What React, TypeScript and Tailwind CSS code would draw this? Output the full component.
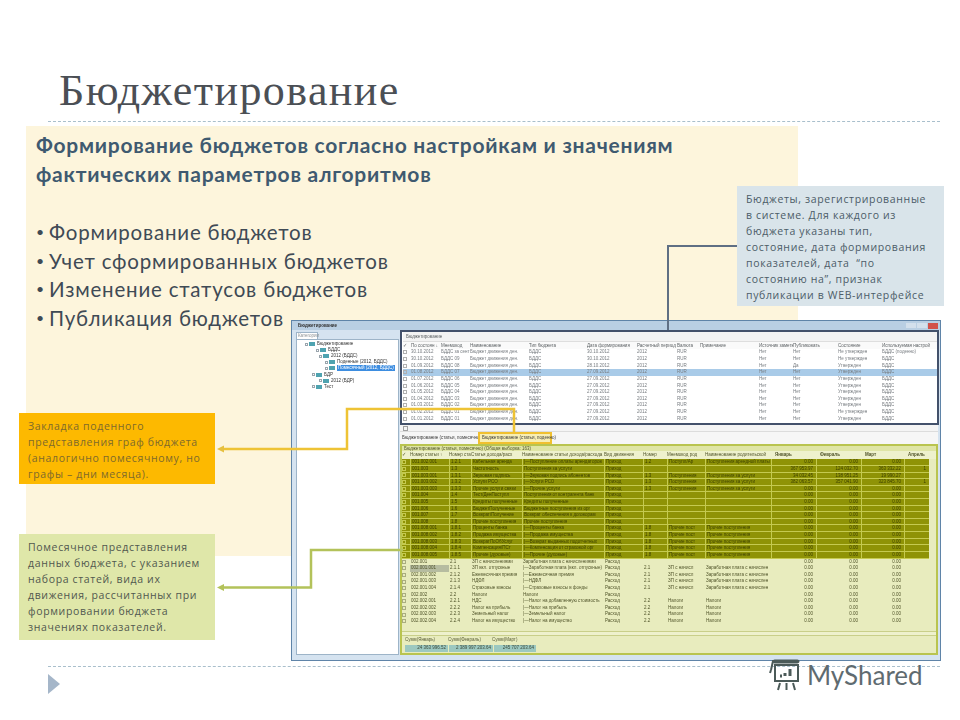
const topCols = "grid grid-cols-[8px_30px_29px_59px_58px_50px_40px_23px_59px_34px_45px_44px_50px]";
const gridCols = "grid grid-cols-[8px_39px_22px_51px_82px_39px_24px_38px_66px_45px_45px_43px_25px]";

const topHead = ["✓", "По состоян ↓", "Мнемокод", "Наименование", "Тип бюджета", "Дата формирования", "Расчетный период", "Валюта", "Примечание", "Источник заметк", "Публиковать", "Состояние", "Используемая настрой"];

const budgets = [
  ["30.10.2012", "БДДС за сент", "30.10.2012", "Нет", "Не утвержден", "БДДС (поденно)"],
  ["30.10.2012", "БДДС 09", "30.10.2012", "Нет", "Не утвержден", "БДДС"],
  ["01.09.2012", "БДДС 08", "28.10.2012", "Да", "Утвержден", "БДДС"],
  ["01.08.2012", "БДДС 07", "27.09.2012", "Нет", "Утвержден", "БДДС"],
  ["01.07.2012", "БДДС 06", "27.09.2012", "Нет", "Утвержден", "БДДС"],
  ["01.06.2012", "БДДС 05", "27.09.2012", "Нет", "Утвержден", "БДДС"],
  ["01.05.2012", "БДДС 04", "27.09.2012", "Нет", "Утвержден", "БДДС"],
  ["01.04.2012", "БДДС 03", "27.09.2012", "Нет", "Утвержден", "БДДС"],
  ["01.03.2012", "БДДС 02", "27.09.2012", "Нет", "Утвержден", "БДДС"],
  ["01.02.2012", "БДДС 01", "27.09.2012", "Нет", "Не утвержден", "БДДС"],
  ["01.01.2012", "БДДС 01", "27.09.2012", "Нет", "Утвержден", "БДДС"],
];

const gridHead = ["✓", "Номер статьи ↑", "Номер ста", "Статья дохода/расх", "Наименование статьи дохода/расхода", "Вид движения", "Номер", "Мнемокод род", "Наименование родительской", "Январь", "Февраль", "Март", "Апрель"];

const olive = [
  ["001.002.001", "1.2.1", "Кабельная аренда", "|—Поступление оплаты арендаторов", "Приход", "1.2", "Поступл/Ар", "Поступления арендной платы", "0.00", "0.00", "0.00", ""],
  ["001.003", "1.3", "Частотность", "Поступления за услуги", "Приход", "", "", "", "367 953.97", "124 032.70", "363 332.22", "1"],
  ["001.003.001", "1.3.1", "Звуковая подпись", "|—Звуковая подпись абонентов", "Приход", "1.3", "Поступления", "Поступления за услуги", "34 032.45", "138 951.25", "19 990.27", ""],
  ["001.003.002", "1.3.2", "Услуги РСО", "|—Услуги РСО", "Приход", "1.3", "Поступления", "Поступления за услуги", "382 063.57", "357 041.90", "323 845.70", "1"],
  ["001.003.003", "1.3.3", "Прочие услуги связи", "|—Прочие услуги", "Приход", "1.3", "Поступления", "Поступления за услуги", "0.00", "0.00", "0.00", ""],
  ["001.004", "1.4", "Тест/ДенПоступл", "Поступления от контрагента банк", "Приход", "", "", "", "0.00", "0.00", "0.00", ""],
  ["001.005", "1.5", "Кредиты полученные", "Кредиты полученные", "Приход", "", "", "", "0.00", "0.00", "0.00", ""],
  ["001.006", "1.6", "БюджетПолученные", "Бюджетные поступления из орг", "Приход", "", "", "", "0.00", "0.00", "0.00", ""],
  ["001.007", "1.7", "Возврат/Получение", "Возврат обеспечения к договорам", "Приход", "", "", "", "0.00", "0.00", "0.00", ""],
  ["001.008", "1.8", "Прочие поступления", "Прочие поступления", "Приход", "", "", "", "0.00", "0.00", "0.00", ""],
  ["001.008.001", "1.8.1", "Проценты банка", "|—Проценты банка", "Приход", "1.8", "Прочие пост", "Прочие поступления", "0.00", "0.00", "0.00", ""],
  ["001.008.002", "1.8.2", "Продажа имущества", "|—Продажа имущества", "Приход", "1.8", "Прочие пост", "Прочие поступления", "0.00", "0.00", "0.00", ""],
  ["001.008.003", "1.8.3", "ВозвратПоОбУслуг", "|—Возврат выданных подотчетных", "Приход", "1.8", "Прочие пост", "Прочие поступления", "0.00", "0.00", "0.00", ""],
  ["001.008.004", "1.8.4", "Компенсация/ПСт", "|—Компенсация от страховой орг", "Приход", "1.8", "Прочие пост", "Прочие поступления", "0.00", "0.00", "0.00", ""],
  ["001.008.005", "1.8.5", "Прочие (духовые)", "|—Прочие (духовые)", "Приход", "1.8", "Прочие пост", "Прочие поступления", "0.00", "0.00", "0.00", ""],
];

const pale = [
  ["002.001", "2.1", "ЗП с начислениями", "Заработная плата с начислениями", "Расход", "", "", "", "0.00", "0.00", "0.00", ""],
  ["002.001.001", "2.1.1", "ЗП вкл. отпускные", "|—Заработная плата (вкл. отпускные)", "Расход", "2.1", "ЗП с начисл", "Заработная плата с начислен", "0.00", "0.00", "0.00", ""],
  ["002.001.002", "2.1.2", "Ежемесячная премия", "|—Ежемесячная премия", "Расход", "2.1", "ЗП с начисл", "Заработная плата с начислен", "0.00", "0.00", "0.00", ""],
  ["002.001.003", "2.1.3", "НДФЛ", "|—НДФЛ", "Расход", "2.1", "ЗП с начисл", "Заработная плата с начислен", "0.00", "0.00", "0.00", ""],
  ["002.001.004", "2.1.4", "Страховые взносы", "|—Страховые взносы в фонды", "Расход", "2.1", "ЗП с начисл", "Заработная плата с начислен", "0.00", "0.00", "0.00", ""],
  ["002.002", "2.2", "Налоги", "Налоги", "Расход", "", "", "", "0.00", "0.00", "0.00", ""],
  ["002.002.001", "2.2.1", "НДС", "|—Налог на добавленную стоимость", "Расход", "2.2", "Налоги", "Налоги", "0.00", "0.00", "0.00", ""],
  ["002.002.002", "2.2.2", "Налог на прибыль", "|—Налог на прибыль", "Расход", "2.2", "Налоги", "Налоги", "0.00", "0.00", "0.00", ""],
  ["002.002.003", "2.2.3", "Земельный налог", "|—Земельный налог", "Расход", "2.2", "Налоги", "Налоги", "0.00", "0.00", "0.00", ""],
  ["002.002.004", "2.2.4", "Налог на имущество", "|—Налог на имущество", "Расход", "2.2", "Налоги", "Налоги", "0.00", "0.00", "0.00", ""],
];

const tree = [
  { label: "Бюджетирование", pad: "pl-[8px]" },
  { label: "БДДС", pad: "pl-[19px]" },
  { label: "2012 (БДДС)", pad: "pl-[22px]" },
  { label: "Поденные (2012, БДДС)", pad: "pl-[28px]" },
  { label: "Помесячный (2012, БДДС)", pad: "pl-[28px]", selected: true },
  { label: "БДР", pad: "pl-[15px]" },
  { label: "2012 (БДР)", pad: "pl-[22px]" },
  { label: "Тест", pad: "pl-[15px]" },
];

const bullets = ["Формирование бюджетов", "Учет сформированных бюджетов", "Изменение статусов бюджетов", "Публикация бюджетов"];

function BudgetWindow() {
  return (
    <div className="absolute left-[291px] top-[320px] w-[650px] h-[341px] border border-[#5f84a8] bg-[#d5e3f0] flex flex-col font-['Liberation_Sans',sans-serif] text-[4.5px] leading-[6px] text-[#5a5f62] blur-[0.3px]">
      {/* заголовок окна */}
      <div className="h-[9px] shrink-0 flex items-center justify-between pl-[6px] pr-[2px] bg-[#b9cfe3]">
        <span className="font-bold text-[#333]">Бюджетирование</span>
        <div className="flex items-center gap-[1px]">
          <div className="w-[10px] h-[5px] bg-[#d3e0ec]"></div>
          <div className="w-[10px] h-[5px] bg-[#d3e0ec]"></div>
          <div className="w-[10px] h-[6px] bg-[#d2524a]"></div>
        </div>
      </div>

      <div className="flex-1 flex pl-[4px] pr-[3px] pb-[5px] gap-[1px] min-h-0">
        {/* дерево категорий */}
        <div className="w-[103px] shrink-0 flex flex-col pt-[2px]">
          <div className="w-[22px] h-[7px] bg-white border border-b-0 border-[#9db4c8] text-[#8a8f92] px-[1px] leading-[6px]">Категории</div>
          <div className="flex-1 bg-white border border-[#9db4c8] pt-[1px]">
            {tree.map((node) => (
              <div key={node.label} className={`flex items-center gap-[1px] h-[6.1px] whitespace-nowrap ${node.pad}`}>
                <div className="w-[3px] h-[3px] border-[0.5px] border-[#9aa5ad]"></div>
                <div className="w-[6px] h-[4px] bg-[#4fa3b0] mr-[1px]"></div>
                <span className={node.selected ? "bg-[#3d8de0] text-white px-[1px]" : "text-[#333]"}>{node.label}</span>
              </div>
            ))}
          </div>
        </div>

        <div className="flex-1 flex flex-col min-w-0 -mr-[1px]">
          {/* реестр бюджетов */}
          <div className="h-[95px] shrink-0 -mr-[1px] border-2 border-[#43516b] bg-white pl-[1px]">
            <div className="h-[10px] flex items-center pl-[3px] bg-[#f3f3f3] border-b border-[#dedede]">Бюджетирование</div>
            <div className={`${topCols} h-[7px] items-center bg-[#fafafa]`}>
              {topHead.map((h) => (
                <div key={h} className="whitespace-nowrap overflow-hidden">{h}</div>
              ))}
            </div>
            {budgets.map((b, i) => (
              <div key={i} className={`${topCols} h-[6.65px] items-center text-[#777c80] ${i === 3 ? "bg-[#a9cbe8]" : ""}`}>
                <div className="w-[4px] h-[4px] border-[0.5px] border-[#b0b0b0]"></div>
                <div>{b[0]}</div>
                <div className="whitespace-nowrap overflow-hidden">{b[1]}</div>
                <div className="whitespace-nowrap overflow-hidden">Бюджет движения ден.</div>
                <div>БДДС</div>
                <div>{b[2]}</div>
                <div>2012</div>
                <div>RUR</div>
                <div></div>
                <div>Нет</div>
                <div>{b[3]}</div>
                <div>{b[4]}</div>
                <div>{b[5]}</div>
              </div>
            ))}
          </div>

          {/* панель разделителя */}
          <div className="h-[7px] shrink-0 flex items-center pl-[3px] bg-[#f4f4f4] border-b border-[#dcdcdc]">
            <div className="w-[5px] h-[5px] border-[0.5px] border-[#a0a0a0]"></div>
          </div>

          {/* закладки */}
          <div className="h-[12px] shrink-0 flex items-center pl-[2px] bg-[#f6f6f6] text-[#3a3a3a]">
            <div className="w-[76px] whitespace-nowrap">Бюджетирование (статьи, помесячно)</div>
            <div className="w-[74px] h-[12px] flex items-center pl-[2px] border-2 border-[#f0c030] bg-[#f7eeb4] whitespace-nowrap">Бюджетирование (статьи, поденно)</div>
          </div>

          {/* таблица статей */}
          <div className="flex-1 flex flex-col min-h-0 border-2 border-[#b9c44f] bg-[#e8ecbe] text-[#50542a]">
            <div className="h-[5px] shrink-0 flex items-center pl-[2px] bg-[#dfe5a6] whitespace-nowrap">Бюджетирование (статьи, помесячно) (Общая выборка: 163)</div>
            <div className={`${gridCols} h-[8.4px] shrink-0 items-center bg-[#eef1cd]`}>
              {gridHead.map((h, i) => (
                <div key={h} className={`whitespace-nowrap overflow-hidden ${i > 8 ? "font-bold pl-[4px]" : ""}`}>{h}</div>
              ))}
            </div>
            {olive.map((r, i) => (
              <GridRow key={i} cells={r} olive />
            ))}
            {pale.map((r, i) => (
              <GridRow key={i} cells={r} marked={i === 1} />
            ))}
            <div className="flex-1"></div>
            <div className="h-[5px] shrink-0 border-y border-[#c9cf8a] bg-[#eef1cd]"></div>
            <div className="h-[17px] shrink-0 pt-[1px] pl-[3px]">
              <div className="flex text-[#5a5e3a]">
                <div className="w-[43px]">Сумм(Январь)</div>
                <div className="w-[44px]">Сумм(Февраль)</div>
                <div className="w-[43px]">Сумм(Март)</div>
              </div>
              <div className="flex mt-[1.5px] text-[#3c4a3a]">
                <div className="w-[43px] h-[7px] bg-[#9cc8c0] text-right pr-[2px]">24 363 996.52</div>
                <div className="w-[44px] h-[7px] bg-[#9cc8c0] text-right pr-[2px] ml-[1px]">2 389 997 203.64</div>
                <div className="w-[42px] h-[7px] bg-[#9cc8c0] text-right pr-[2px] ml-[1px]">245 707 203.64</div>
              </div>
            </div>
          </div>
        </div>
      </div>
    </div>
  );
}

function GridRow({ cells, olive, marked }: { cells: string[]; olive?: boolean; marked?: boolean }) {
  return (
    <div className={`${gridCols} h-[6.62px] shrink-0 items-center ${olive ? "bg-[#8f9306] text-[#3c3f00] border-b-[0.5px] border-[#c5ca50]" : ""} w-[527px]`}>
      <div className={`w-[4px] h-[4px] border-[0.5px] ${olive ? "border-[#c5ca50]" : "border-[#a9ad80]"}`}></div>
      {cells.map((c, i) => (
        <div
          key={i}
          className={`h-full whitespace-nowrap overflow-hidden ${i > 7 ? "text-right pr-[3px]" : "pl-[1px]"} ${olive ? "border-l-[0.5px] border-[#c5ca50]" : ""} ${marked && i === 0 ? "bg-[#b6bca0]" : ""}`}
        >
          {c}
        </div>
      ))}
    </div>
  );
}

function Connectors() {
  return (
    <svg className="absolute left-0 top-0 pointer-events-none" width="960" height="720" viewBox="0 0 960 720" fill="none">
      <path d="M737 246H668V330" stroke="#5f6f84" strokeWidth="2" />
      <path d="M224 449H347V409H514V432" stroke="#eec335" strokeWidth="2.5" />
      <path d="M217 449L224 445.5V452.5Z" fill="#e6c040" />
      <path d="M224 587.5H311V550H403" stroke="#b3c25a" strokeWidth="2.5" />
      <path d="M217 587.5L224 584V591Z" fill="#b3c25a" />
    </svg>
  );
}

function Logo() {
  return (
    <div className="absolute left-[768px] top-[658px] flex items-center gap-[6px]">
      <svg width="33" height="34" viewBox="0 0 33 34" fill="none" stroke="#4b5a58">
        <path d="M3 12L5 3H31" strokeWidth="2" />
        <rect x="5" y="2" width="26" height="3" fill="#4b5a58" strokeWidth="1" rx="1.5" />
        <path d="M2 15L3 12" strokeWidth="2" />
        <rect x="7" y="7" width="23" height="16" strokeWidth="2" />
        <path d="M12 18h2M17 18v-3M22 18v-7" strokeWidth="3" />
        <path d="M12 25L10 32M18.5 25V32M25 25L27 32" strokeWidth="2" />
      </svg>
      <span className="font-['Lato','Open_Sans',sans-serif] text-[26px] leading-[34px] text-[#5f6b70]">MyShared</span>
    </div>
  );
}

export default function App() {
  return (
    <div className="relative w-[960px] h-[720px] bg-white overflow-hidden font-['Open_Sans',sans-serif]">
      <h1 className="h-[118px] pt-[66px] pl-[59px] font-['Liberation_Serif',serif] text-[44px] leading-[50px] tracking-[1.43px] text-[#4b4f55]">
        Бюджетирование
      </h1>
      <div className="ml-[48px] mr-[20px] mt-[3px] border-t border-dashed border-[#a9bfcc]"></div>

      <section className="ml-[26px] mt-[4px] w-[772px] h-[430px] bg-[#fdf5dc] pl-[10px] pt-[4px]">
        <h2 className="font-['Lato','Open_Sans',sans-serif] font-bold text-[21px] leading-[29px] tracking-[0.75px] text-[#3f5a70] w-[680px]">
          Формирование бюджетов согласно настройкам и значениям фактических параметров алгоритмов
        </h2>
        <ul className="mt-[30px] font-['Lato','Open_Sans',sans-serif] text-[20.5px] leading-[28.7px] tracking-[0.8px] text-[#3f4a55]">
          {bullets.map((item) => (
            <li key={item} className="flex">
              <span className="w-[13px] text-[14px]">•</span>
              {item}
            </li>
          ))}
        </ul>
      </section>

      <div className="ml-[48px] mr-[20px] mt-[110px] border-t border-dashed border-[#a9bfcc]"></div>
      <div className="ml-[48px] mt-[7px] w-0 h-0 border-y-[10px] border-y-transparent border-l-[12px] border-l-[#a5b6c9]"></div>

      <BudgetWindow />
      <Connectors />

      <aside className="absolute left-[737px] top-[186px] w-[207px] h-[120px] bg-[#d9e4ea] pl-[9px] pt-[5px] text-[10.5px] leading-[16px] tracking-[0.65px] text-[#4c5c68] whitespace-nowrap">
        Бюджеты, зарегистрированные<br />
        в системе. Для каждого из<br />
        бюджета указаны тип,<br />
        состояние, дата формирования<br />
        показателей, дата&nbsp; “по<br />
        состоянию на”, признак<br />
        публикации в WEB-интерфейсе
      </aside>
      <aside className="absolute left-[19px] top-[413px] w-[196px] h-[71px] bg-[#fdb900] pl-[9px] pt-[5px] text-[10.5px] leading-[16px] tracking-[0.65px] text-[#7d6a2c] whitespace-nowrap">
        Закладка поденного<br />
        представления граф бюджета<br />
        (аналогично помесячному, но<br />
        графы – дни месяца).
      </aside>
      <aside className="absolute left-[19px] top-[534px] w-[196px] h-[106px] bg-[#dfe7a9] pl-[9px] pt-[5px] text-[10.5px] leading-[16px] tracking-[0.65px] text-[#51584f] whitespace-nowrap">
        Помесячное представления<br />
        данных бюджета, с указанием<br />
        набора статей, вида их<br />
        движения, рассчитанных при<br />
        формировании бюджета<br />
        значениях показателей.
      </aside>

      <Logo />
    </div>
  );
}
